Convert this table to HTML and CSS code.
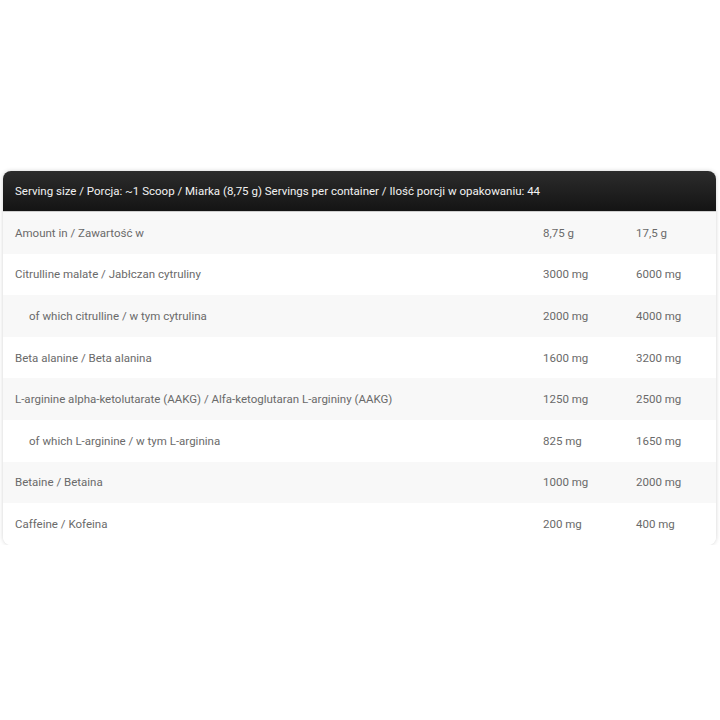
FILE: index.html
```html
<!DOCTYPE html>
<html lang="pl">
<head>
<meta charset="utf-8">
<link rel="stylesheet" href="styles.css">
</head>
<body>
<div class="page">
  <div class="card">
    <div class="head">Serving size / Porcja: ~1 Scoop / Miarka (8,75 g) Servings per container / Ilość porcji w opakowaniu: 44</div>
    <div class="row odd"><span class="name">Amount in / Zawartość w</span><span class="v1">8,75 g</span><span class="v2">17,5 g</span></div>
    <div class="row"><span class="name">Citrulline malate / Jabłczan cytruliny</span><span class="v1">3000 mg</span><span class="v2">6000 mg</span></div>
    <div class="row odd"><span class="name sub">of which citrulline / w tym cytrulina</span><span class="v1">2000 mg</span><span class="v2">4000 mg</span></div>
    <div class="row"><span class="name">Beta alanine / Beta alanina</span><span class="v1">1600 mg</span><span class="v2">3200 mg</span></div>
    <div class="row odd"><span class="name">L-arginine alpha-ketolutarate (AAKG) / Alfa-ketoglutaran L-argininy (AAKG)</span><span class="v1">1250 mg</span><span class="v2">2500 mg</span></div>
    <div class="row"><span class="name sub">of which L-arginine / w tym L-arginina</span><span class="v1">825 mg</span><span class="v2">1650 mg</span></div>
    <div class="row odd"><span class="name">Betaine / Betaina</span><span class="v1">1000 mg</span><span class="v2">2000 mg</span></div>
    <div class="row"><span class="name">Caffeine / Kofeina</span><span class="v1">200 mg</span><span class="v2">400 mg</span></div>
  </div>
</div>
</body>
</html>
```
FILE: styles.css
```css
html, body {
  margin: 0;
  padding: 0;
  background: #ffffff;
}
.page {
  padding: 171px 4px 0 3px;
  font-family: Roboto, "Noto Sans", sans-serif;
  font-size: 11.5px;
}
.card {
  border-radius: 8px;
  background: #ffffff;
  box-shadow: 0 0 4px rgba(0,0,0,0.18);
  overflow: hidden;
}
.head {
  height: 40px;
  display: flex;
  align-items: center;
  padding-left: 12px;
  background: linear-gradient(#2c2c2c, #141414);
  color: #f2f2f2;
  border-bottom: 1px solid #cfcfcf;
}
.row {
  height: 41.6px;
  display: grid;
  grid-template-columns: 528px 93px 1fr;
  align-items: center;
  padding-left: 12px;
  color: #6a6a6a;
  background: #ffffff;
}
.row.odd {
  background: #f8f8f8;
}
.sub {
  padding-left: 14px;
}
```
